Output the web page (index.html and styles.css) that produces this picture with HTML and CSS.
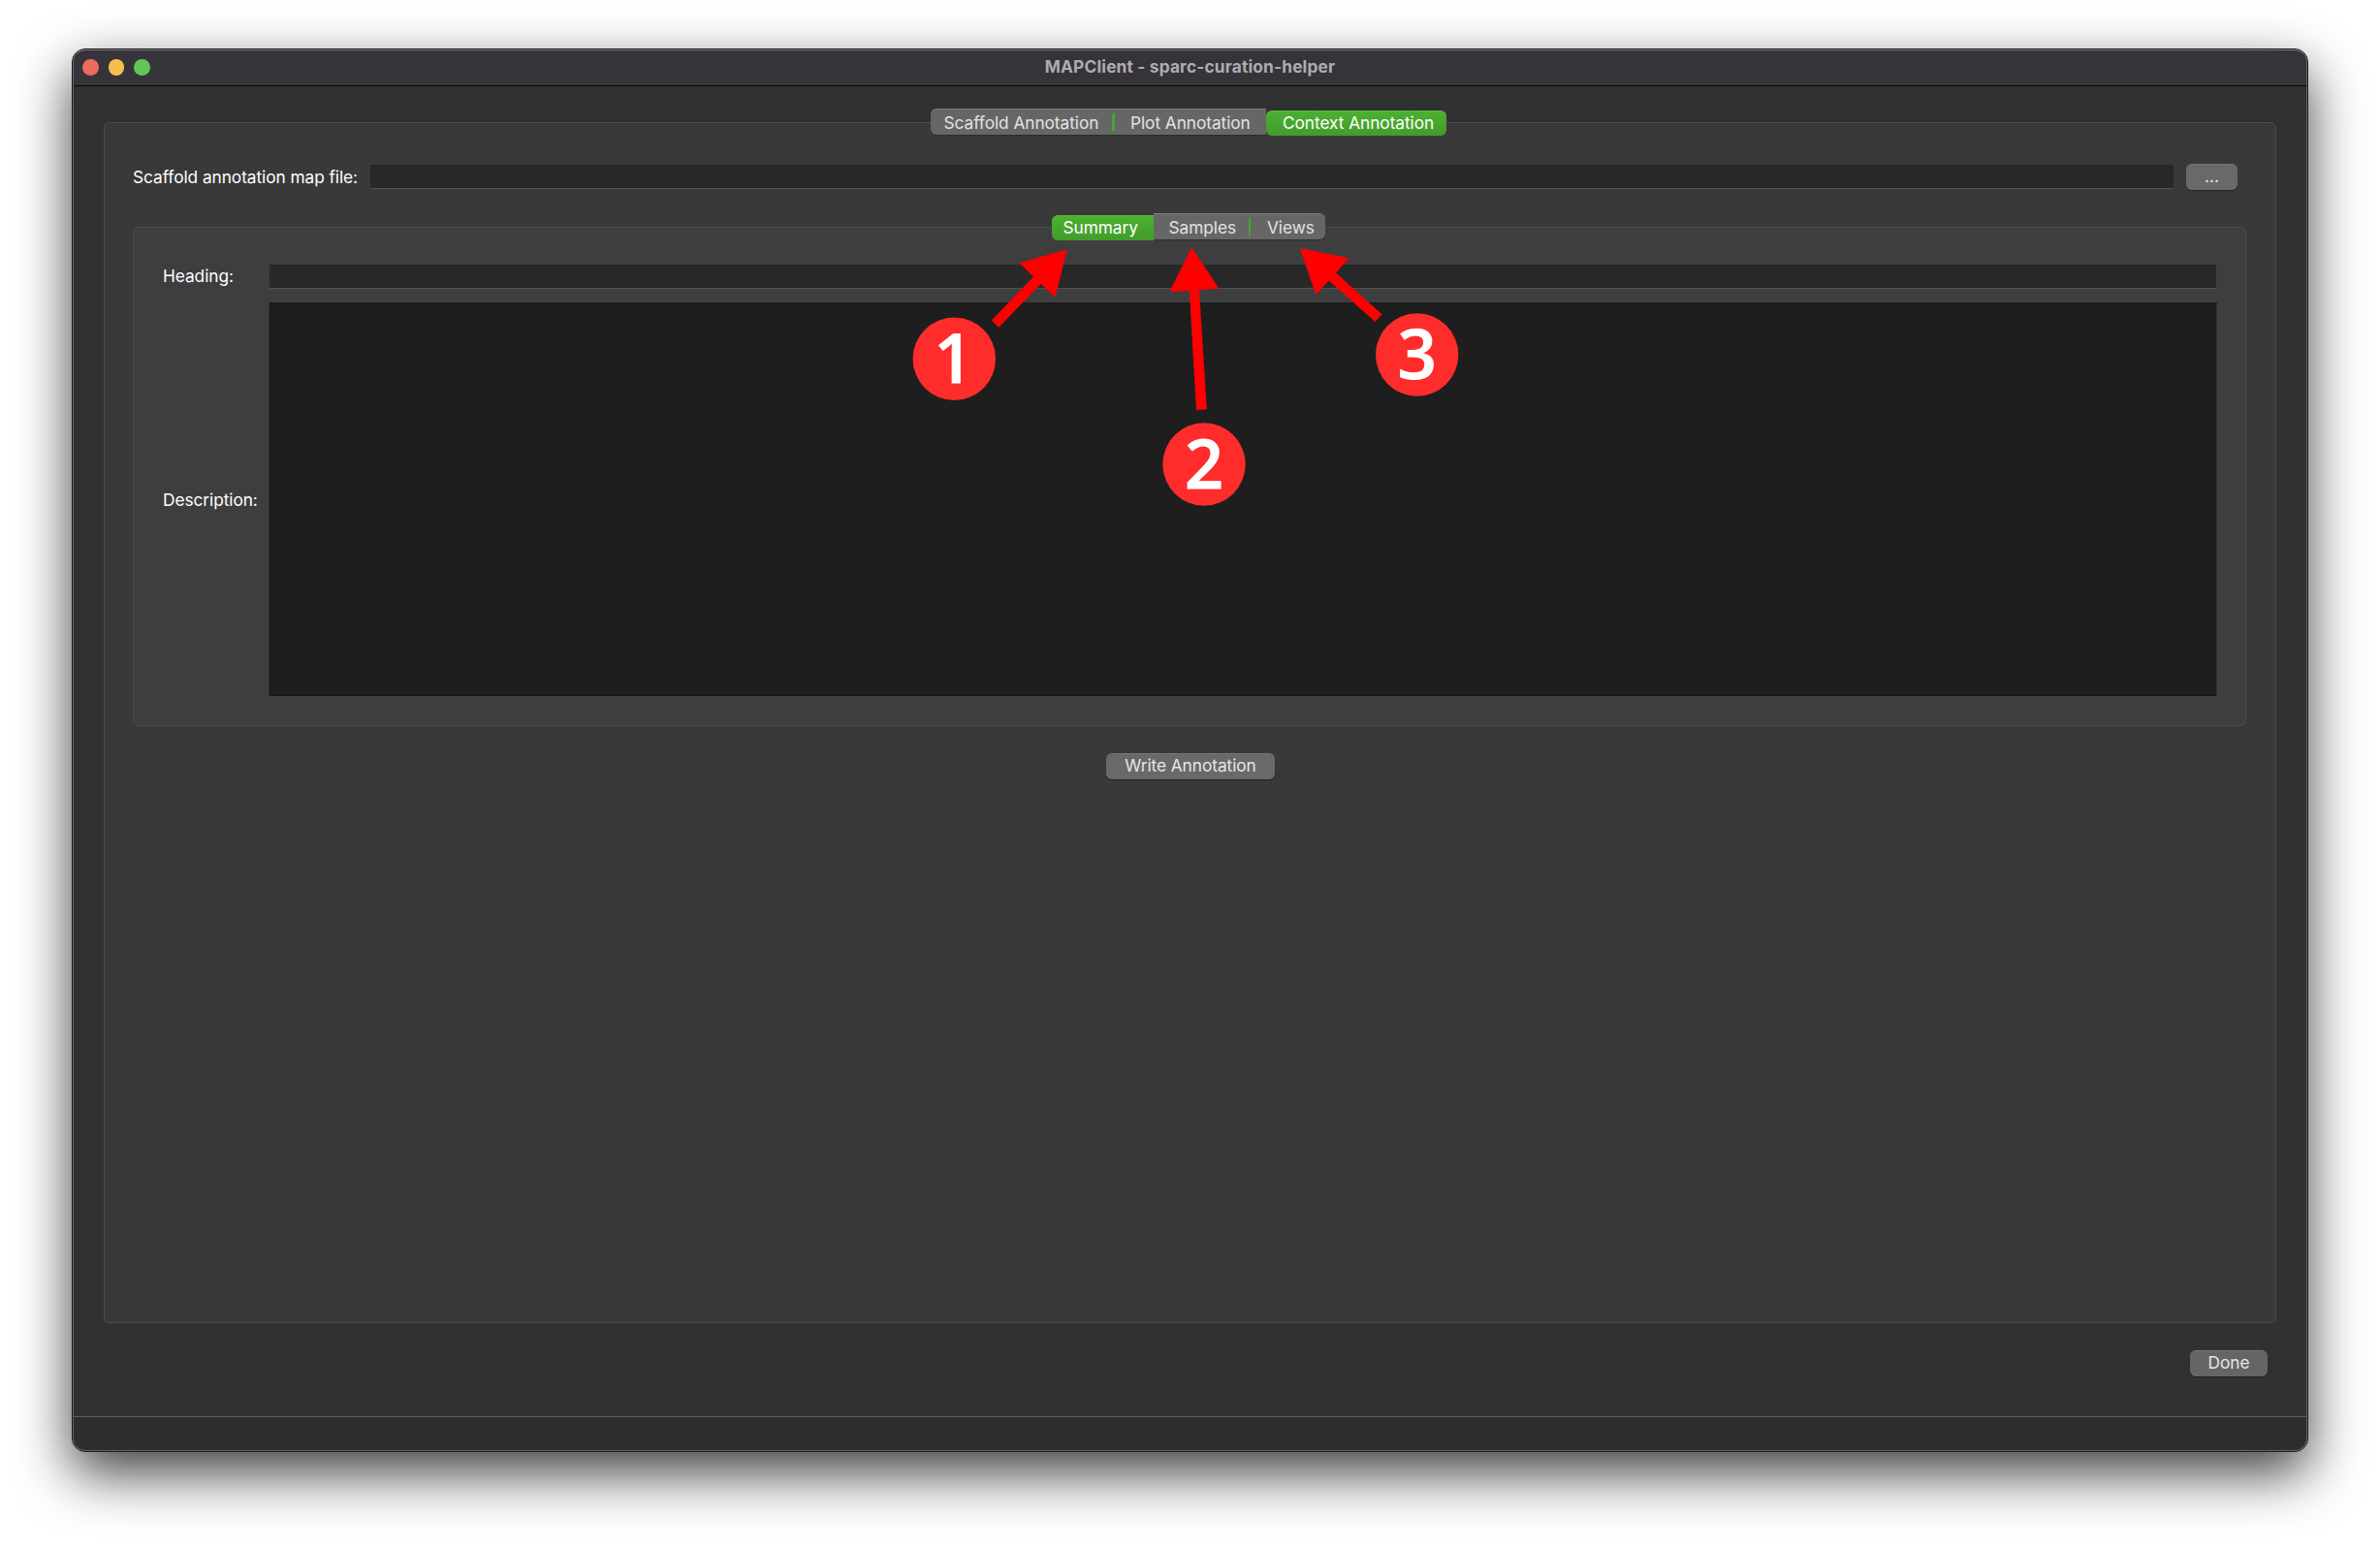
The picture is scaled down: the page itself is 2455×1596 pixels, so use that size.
FILE: index.html
```html
<!DOCTYPE html>
<html lang="en">
<head>
<meta charset="utf-8">
<title>MAPClient - sparc-curation-helper</title>
<link rel="stylesheet" href="styles.css">
</head>
<body>
<main class="window">
  <header class="titlebar">
    <div class="lights"><i class="light close"></i><i class="light minimise"></i><i class="light zoom"></i></div>
    <h1 class="title">MAPClient - sparc-curation-helper</h1>
  </header>

  <section class="content">
    <nav class="tabs tabs-main">
      <span class="tab tab-scaffold">Scaffold Annotation</span>
      <span class="tab tab-plot">Plot Annotation</span>
      <span class="tab tab-context selected">Context Annotation</span>
    </nav>
    <div class="group group-main">
      <div class="file-row">
        <label class="label file-label">Scaffold annotation map file:</label>
        <div class="field"></div>
        <span class="button button-browse">...</span>
      </div>
      <nav class="tabs tabs-context">
        <span class="tab tab-summary selected">Summary</span>
        <span class="tab tab-samples">Samples</span>
        <span class="tab tab-views">Views</span>
      </nav>
      <div class="group group-summary">
        <label class="label heading-label">Heading:</label>
        <div class="field heading-field"></div>
        <label class="label description-label">Description:</label>
        <div class="textarea"></div>
      </div>
      <span class="button button-write">Write Annotation</span>
    </div>
    <span class="button button-done">Done</span>
  </section>
  <footer class="statusbar"></footer>
</main>

<svg class="callouts" viewBox="0 0 2455 1596">
  <g class="arrow">
    <path d="M1100.7 257.3 L1051.3 271.3 L1066 285.5 L1022.8 330.5 L1030.3 337.7 L1073.6 293 L1088.5 306.8 Z"/>
    <path d="M1229.3 255.3 L1206.3 301 L1226.8 300 L1234 423 L1244.8 422.3 L1237 299 L1257.5 297.8 Z"/>
    <path d="M1341 256 L1357.2 304.3 L1370.8 289.6 L1418.5 332 L1425.5 324.3 L1378 281.5 L1391.7 266.3 Z"/>
  </g>
  <g class="badge">
    <circle cx="984.3" cy="370.2" r="42.7"/>
    <circle cx="1242" cy="479" r="42.7"/>
    <circle cx="1461.7" cy="366" r="42.7"/>
  </g>
  <g class="digit">
    <text x="983.5" y="395">1</text>
    <text x="1242" y="504">2</text>
    <text x="1461.7" y="391">3</text>
  </g>
</svg>
</body>
</html>
```
FILE: styles.css
```css
* { box-sizing: border-box; }

body {
  margin: 0;
  height: 1596px;
  padding: 50px 74px 98px;
  overflow: hidden;
  background: #fff;
  font: 17.3px/22px Inter, "Liberation Sans", sans-serif;
  letter-spacing: -0.06px;
  color: #fff;
}

.window {
  position: relative;
  display: flex;
  flex-direction: column;
  height: 1448px;
  border: 1px solid #1b1b1c;
  border-radius: 14px;
  background: #313131;
  box-shadow: 0 22px 56px rgba(0, 0, 0, 0.75);
}

/* light inner hairline over the bars */
.window::after {
  content: "";
  position: absolute;
  inset: 0;
  border: 1px solid #646464;
  border-top-color: #7b7b7d;
  border-radius: 13px;
  pointer-events: none;
}

.titlebar {
  display: grid;
  grid-template-columns: 1fr auto 1fr;
  align-items: center;
  height: 38px;
  border-bottom: 1px solid #080808;
  border-radius: 13px 13px 0 0;
  background: #36343a;
}

.lights { display: flex; gap: 10.2px; padding-left: 10.3px; }
.light { width: 16.4px; height: 16.4px; border-radius: 50%; }
.close { background: #ed6a5f; }
.minimise { background: #f5bf4f; }
.zoom { background: #61c555; }

.title {
  margin: 0;
  padding-bottom: 2px;
  font-size: 17.3px;
  font-weight: 700;
  letter-spacing: 0.17px;
  color: #adacb0;
}

.content {
  display: flex;
  flex-direction: column;
  flex: 1;
  padding: 23px 32px 0;
}

.tabs {
  position: relative;
  display: flex;
  align-self: center;
  align-items: flex-start;
  height: 28px;
  margin-bottom: -14px;
  white-space: nowrap;
}
.tabs-main { margin-right: 3px; }
.tabs-context { margin: 24px 3px -14px 0; }

.tab {
  height: 27px;
  padding-top: 4px;
  background: #666;
  border-top: 1px solid #7c7c7c;
  box-shadow: 0 1px 0 #2c2c2c;
  line-height: 20px;
  color: #e2e2e2;
}
.tab.selected {
  height: 26px;
  margin-top: 2px;
  padding-top: 2px;
  border-top-color: #5bb944;
  background: linear-gradient(#4bb030, #429c2a);
  box-shadow: none;
  color: #fff;
}

.tab-scaffold { width: 187px; padding-left: 13.5px; border-radius: 6px 0 0 6px; }
.tab-plot { position: relative; width: 159px; padding-left: 19px; }
.tab-context { width: 186px; padding-left: 17px; border-radius: 6px; }
.tab-summary { width: 105px; padding-left: 12px; border-radius: 6px 0 0 6px; }
.tab-samples { width: 100px; padding-left: 16px; }
.tab-views { position: relative; width: 77px; padding-left: 17.5px; border-radius: 0 6px 6px 0; }

/* sliver of accent colour between unselected tabs */
.tab-plot::before,
.tab-views::before {
  content: "";
  position: absolute;
  left: -2px;
  top: 3px;
  width: 2.5px;
  height: 20px;
  border-radius: 3px 0 0 3px;
  background: #45a42c;
}
.tab-plot::before { left: 0; }

.group { border: 1px solid #4a4a4a; border-radius: 5px; }

.group-main {
  display: flex;
  flex-direction: column;
  height: 1239px;
  padding: 42px 30px 0 29px;
  background: #393939;
}

.file-row { display: flex; align-items: center; height: 27px; padding-right: 9px; }
.label { white-space: nowrap; }
.file-label { width: 245px; }

.field {
  flex: 1;
  height: 25px;
  background: #282828;
  border-bottom: 1px solid #525252;
}

.button {
  height: 27px;
  border-radius: 6px;
  background: #696969;
  border-top: 1px solid #747474;
  box-shadow: 0 1px 1px rgba(0, 0, 0, 0.35);
  line-height: 24px;
  text-align: center;
  color: #e6e6e6;
}
.button-browse { width: 53px; margin-left: 13px; }
.button-write { align-self: center; width: 174px; margin: 28px 0 0 2px; }
.button-done { align-self: flex-end; width: 80px; margin: 28px 9px 0 0; background: #656565; }

.group-summary {
  display: grid;
  grid-template-columns: 109px 1fr;
  grid-template-rows: 25px 406px;
  row-gap: 15px;
  align-items: center;
  height: 515px;
  padding: 37px 29px 0 30px;
  border-color: #4c4c4c;
  background: #3e3e3e;
}
.heading-label { padding-top: 1px; }
.description-label { padding-top: 2px; }
.heading-field { margin: 1px 1px 0 1px; }
.textarea {
  align-self: stretch;
  background: #1e1e1e;
  border: 1px solid #303030;
  border-top-color: #191919;
  border-bottom-color: #151515;
}

.statusbar {
  height: 36px;
  border-top: 1px solid #5e5e5e;
  border-radius: 0 0 13px 13px;
  background: #2e2e2e;
}

.callouts {
  position: absolute;
  left: 0;
  top: 0;
  width: 2455px;
  height: 1596px;
  pointer-events: none;
}
.arrow { fill: #f00; }
.badge { fill: #ff2c2c; }
.digit {
  fill: #fff;
  stroke: #fff;
  stroke-width: 1px;
  font: 600 70px "Open Sans", "Noto Sans", sans-serif;
  text-anchor: middle;
}
```
